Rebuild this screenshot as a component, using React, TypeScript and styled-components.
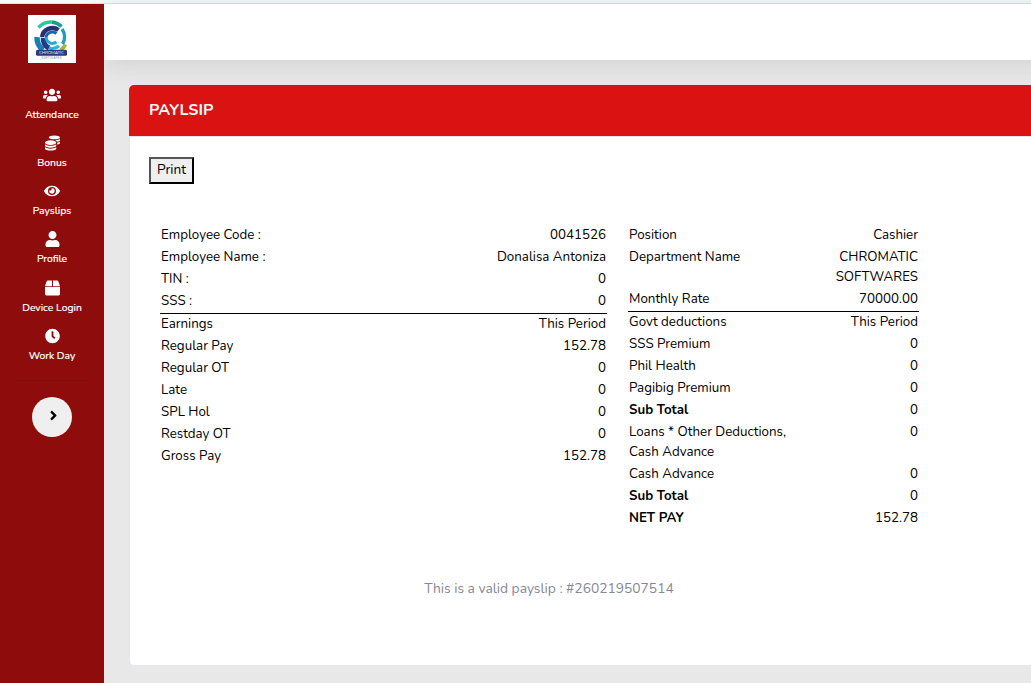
import React from "react";
import styled, { createGlobalStyle } from "styled-components";
import { FaUsers, FaCoins, FaEye, FaUser, FaBox, FaClock, FaAngleRight } from "react-icons/fa";

const GlobalStyle = createGlobalStyle`
  *, *::before, *::after { box-sizing: border-box; }
  html, body { margin: 0; height: 100%; overflow: hidden; }
  body { font-family: Nunito, Lato, "Open Sans", sans-serif; background: #e8e8e8; color: #000; }
`;

const Page = styled.div`
  height: 683px;
  display: flex;
  flex-direction: column;
  overflow: hidden;
`;
const Strip = styled.div`
  flex: none;
  height: 4px;
  background: #f5fafa;
  border-bottom: 1px solid #d9e3e3;
`;
const Shell = styled.div`
  flex: 1;
  display: flex;
  min-height: 0;
`;
const Sidebar = styled.nav`
  width: 104px;
  flex: none;
  background: #8e0c0c;
  display: flex;
  flex-direction: column;
  align-items: center;
  padding-top: 11px;
  z-index: 1;
`;
const Logo = styled.svg`
  display: block;
  width: 48px;
  height: 48px;
  flex: none;
  margin-bottom: 23.9px;
`;
const NavItem = styled.a`
  height: 48.17px;
  flex: none;
  display: flex;
  flex-direction: column;
  align-items: center;
  color: #fff;
  svg { height: 16px; display: block; }
`;
const NavLabel = styled.span`
  font-size: 10.4px;
  line-height: 16px;
  margin-top: 4px;
  -webkit-text-stroke: 0.2px #fff;
  white-space: nowrap;
`;
const Divider = styled.hr`
  width: 72px;
  flex: none;
  margin: 4px 0 16px;
  border: 0;
  border-top: 1px solid #7d0b0c;
`;
const Toggle = styled.button`
  width: 40px;
  height: 40px;
  border: 0;
  border-radius: 50%;
  background: #efefef;
  padding: 0 0 3px 2px;
  display: flex;
  align-items: center;
  justify-content: center;
  color: #000;
`;
const Main = styled.main`
  flex: 1;
  min-width: 0;
  display: flex;
  flex-direction: column;
`;
const Topbar = styled.header`
  height: 56px;
  flex: none;
  background: #fff;
  margin-right: -40px;
  box-shadow: 0 2.4px 28px 0 rgba(58, 59, 69, 0.15);
`;
const Card = styled.section`
  margin: 25px -20px 0 25px;
  height: 581px;
  border: 1px solid #e3e6f0;
  border-radius: 5px;
  background: #fff;
`;
const CardHeader = styled.div`
  margin: -1px -1px 0;
  height: 52px;
  background: #da1212;
  border-bottom: 1px solid #e3e6f0;
  border-radius: 5px 5px 0 0;
  padding: 13px 20px;
`;
const Title = styled.h6`
  margin: 0;
  font-size: 16px;
  line-height: 24px;
  font-weight: 700;
  color: #fff;
`;
const CardBody = styled.div`
  padding: 20px 19px;
`;
const PrintButton = styled.button`
  display: block;
  width: 45px;
  height: 27px;
  padding: 0 0 1px;
  border: 2px outset #000;
  background: #efefef;
  color: #000;
  font-family: inherit;
  font-size: 13.6px;
  line-height: 20px;
`;
const Tables = styled.div`
  display: flex;
  align-items: flex-start;
  gap: 21px;
  margin: 41px 0 0 11px;
  height: 304px;
`;
const Table = styled.div<{ $width: number }>`
  width: ${(p) => p.$width}px;
`;
const Row = styled.div<{ $ruled?: boolean }>`
  display: flex;
  justify-content: space-between;
  padding: 0 1px 2px;
  border-top: ${(p) => (p.$ruled ? "1px solid #000" : "0")};
  font-size: 13.33px;
  line-height: 20px;
`;
const Cell = styled.span<{ $bold?: boolean; $end?: boolean }>`
  white-space: pre-line;
  text-align: ${(p) => (p.$end ? "right" : "left")};
  font-weight: ${(p) => (p.$bold ? 700 : 400)};
`;
const Note = styled.p`
  margin: 49px 0 0;
  width: 800px;
  text-align: center;
  font-size: 13.8px;
  line-height: 22px;
  color: #858796;
`;

type Line = { label: string; value: string; bold?: boolean; ruled?: boolean };

const left: Line[] = [
  { label: "Employee Code :", value: "0041526" },
  { label: "Employee Name :", value: "Donalisa Antoniza" },
  { label: "TIN :", value: "0" },
  { label: "SSS :", value: "0" },
  { label: "Earnings", value: "This Period", ruled: true },
  { label: "Regular Pay", value: "152.78" },
  { label: "Regular OT", value: "0" },
  { label: "Late", value: "0" },
  { label: "SPL Hol", value: "0" },
  { label: "Restday OT", value: "0" },
  { label: "Gross Pay", value: "152.78" },
];
const right: Line[] = [
  { label: "Position", value: "Cashier" },
  { label: "Department Name", value: "CHROMATIC\nSOFTWARES" },
  { label: "Monthly Rate", value: "70000.00" },
  { label: "Govt deductions", value: "This Period", ruled: true },
  { label: "SSS Premium", value: "0" },
  { label: "Phil Health", value: "0" },
  { label: "Pagibig Premium", value: "0" },
  { label: "Sub Total", value: "0", bold: true },
  { label: "Loans * Other Deductions,\nCash Advance", value: "0" },
  { label: "Cash Advance", value: "0" },
  { label: "Sub Total", value: "0", bold: true },
  { label: "NET PAY", value: "152.78", bold: true },
];
const nav = [
  { label: "Attendance", Icon: FaUsers, size: 18 },
  { label: "Bonus", Icon: FaCoins, size: 15 },
  { label: "Payslips", Icon: FaEye, size: 16 },
  { label: "Profile", Icon: FaUser, size: 15 },
  { label: "Device Login", Icon: FaBox, size: 15 },
  { label: "Work Day", Icon: FaClock, size: 15 },
];

const PayTable = ({ lines, width }: { lines: Line[]; width: number }) => (
  <Table $width={width}>
    {lines.map((l, i) => (
      <Row key={i} $ruled={l.ruled}>
        <Cell $bold={l.bold}>{l.label}</Cell>
        <Cell $end>{l.value}</Cell>
      </Row>
    ))}
  </Table>
);

const BrandLogo = () => (
  <Logo viewBox="0 0 48 48">
    <rect width="48" height="48" fill="#fff" />
    <g fill="none">
      <path d="M10.5 12.5A17 17 0 0 1 23.5 7" stroke="#2cc5a0" strokeWidth="3.6" />
      <path d="M23.5 7A17 17 0 0 1 33.5 11.5" stroke="#12a08f" strokeWidth="3.6" />
      <path d="M34 14A13.5 13.5 0 0 1 34.5 29" stroke="#1c9dc4" strokeWidth="3.4" />
      <path d="M9 22A15.5 15.5 0 0 0 15 35" stroke="#1b7fb5" strokeWidth="5.5" />
      <path d="M15.5 23A9.5 9.5 0 0 0 21 33" stroke="#223a86" strokeWidth="5.5" />
      <path d="M14 22A10.5 10.5 0 0 1 30.5 15" stroke="#2b2f78" strokeWidth="4.4" />
      <path d="M21 33A11 11 0 0 0 31 31" stroke="#27b5d8" strokeWidth="3" />
      <path d="M28.5 18.5A6.5 6.5 0 0 0 18 22" stroke="#1a66a8" strokeWidth="3" />
      <path d="M18 22A6.5 6.5 0 0 0 28.5 27" stroke="#23a9d6" strokeWidth="3" />
      <path d="M37.5 29.5Q36 33 32.5 35" stroke="#9dba36" strokeWidth="3.6" />
    </g>
    <rect x="8" y="34.7" width="31" height="6" rx="1.5" fill="#29397f" />
    <text x="23.5" y="39.4" textAnchor="middle" fontSize="4.6" fill="#dfe4f2" textLength="25">CHROMATIC</text>
    <text x="23.5" y="43.5" textAnchor="middle" fontSize="3" fill="#777d9a" textLength="20">SOFTWARES</text>
  </Logo>
);

export default function App() {
  return (
    <Page>
      <GlobalStyle />
      <Strip />
      <Shell>
        <Sidebar>
          <BrandLogo />
          {nav.map(({ label, Icon, size }) => (
            <NavItem key={label}>
              <Icon size={size} />
              <NavLabel>{label}</NavLabel>
            </NavItem>
          ))}
          <Divider />
          <Toggle aria-label="Expand"><FaAngleRight size={15} /></Toggle>
        </Sidebar>
        <Main>
          <Topbar />
          <Card>
            <CardHeader><Title>PAYLSIP</Title></CardHeader>
            <CardBody>
              <PrintButton>Print</PrintButton>
              <Tables>
                <PayTable lines={left} width={447} />
                <PayTable lines={right} width={291} />
              </Tables>
              <Note>This is a valid payslip : #260219507514</Note>
            </CardBody>
          </Card>
        </Main>
      </Shell>
    </Page>
  );
}
